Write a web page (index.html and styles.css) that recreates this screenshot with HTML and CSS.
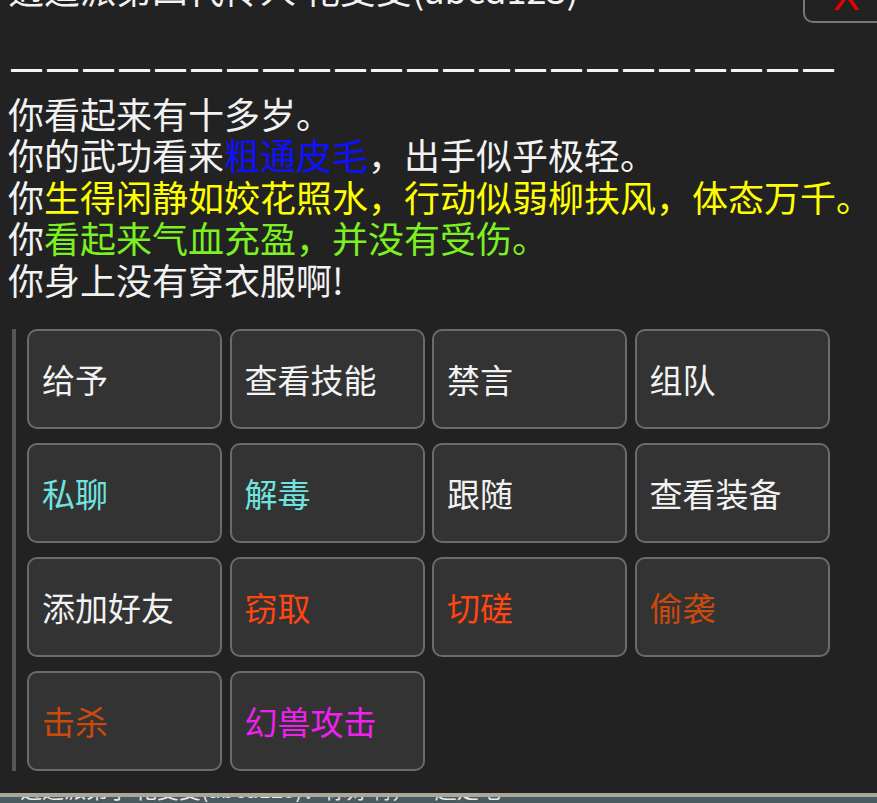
FILE: index.html
```html
<!DOCTYPE html>
<html lang="zh-CN">
<head>
<meta charset="utf-8">
<title>查看人物</title>
<link rel="stylesheet" href="styles.css">
</head>
<body>
<div class="panel">
  <div class="desc">
    <div class="line">逍遥派第四代传人 花旻旻(abcd123)</div>
    <div class="line">&nbsp;</div>
    <div class="line dash">———————————————————————</div>
    <div class="line">你看起来有十多岁。</div>
    <div class="line">你的武功看来<span class="c-blue">粗通皮毛</span>，出手似乎极轻。</div>
    <div class="line">你<span class="c-yellow">生得闲静如姣花照水，行动似弱柳扶风，体态万千。</span></div>
    <div class="line">你<span class="c-green">看起来气血充盈，并没有受伤。</span></div>
    <div class="line">你身上没有穿衣服啊!</div>
  </div>
  <div class="actions">
    <div class="grid">
      <div class="btn">给予</div>
      <div class="btn">查看技能</div>
      <div class="btn">禁言</div>
      <div class="btn">组队</div>
      <div class="btn c-cyan">私聊</div>
      <div class="btn c-cyan">解毒</div>
      <div class="btn">跟随</div>
      <div class="btn">查看装备</div>
      <div class="btn">添加好友</div>
      <div class="btn c-red">窃取</div>
      <div class="btn c-red">切磋</div>
      <div class="btn c-brown">偷袭</div>
      <div class="btn c-brown">击杀</div>
      <div class="btn c-magenta">幻兽攻击</div>
    </div>
  </div>
  <div class="close">X</div>
</div>
<div class="footer">
  <div class="footer-text">逍遥派弟子 花旻旻(abcd123)：你好啊，一起走吧</div>
</div>
</body>
</html>
```
FILE: styles.css
```css
html, body {
  margin: 0;
  padding: 0;
  background: #222222;
  overflow: hidden;
}

body {
  font-family: "Noto Sans CJK SC", "Noto Sans", sans-serif;
  color: #f2f2f2;
}

.panel {
  position: relative;
  background: #222222;
  margin-top: -32px;
  padding: 0 0 22px 0;
}

.desc {
  padding-left: 8px;
  font-size: 36px;
  line-height: 41.5px;
  white-space: nowrap;
}

.line {
  height: 41.5px;
}

.dash {
  font-family: "Liberation Sans", sans-serif;
  font-size: 31px;
  font-weight: bold;
  letter-spacing: 5px;
  color: #f4f4f4;
  margin: -3px 0 3px 3px;
}

.c-blue { color: #1010ff; }
.c-yellow { color: #ffff00; }
.c-green { color: #7cf020; }
.c-cyan { color: #6fe3e0; }
.c-red { color: #ff4510; }
.c-brown { color: #c84a0c; }
.c-magenta { color: #f020f0; }

.actions {
  margin: 29px 0 0 12px;
  border-left: 4px solid #565656;
  padding-left: 11px;
}

.grid {
  display: grid;
  grid-template-columns: repeat(4, 195px);
  grid-auto-rows: 100px;
  column-gap: 7.5px;
  row-gap: 14px;
}

.btn {
  box-sizing: border-box;
  background: #333333;
  border: 2px solid #6b6b6b;
  border-radius: 10px;
  display: flex;
  align-items: center;
  padding-left: 13px;
  font-size: 33px;
  color: #f2f2f2;
}

.btn.c-cyan { color: #6fe3e0; }
.btn.c-red { color: #ff4510; }
.btn.c-brown { color: #c84a0c; }
.btn.c-magenta { color: #f020f0; }

.close {
  position: absolute;
  left: 803px;
  top: -8px;
  width: 90px;
  height: 63px;
  box-sizing: border-box;
  border: 2px solid #777777;
  border-radius: 10px;
  background: #222222;
  display: flex;
  align-items: flex-end;
  padding: 0 0 5px 28px;
  font-family: "Liberation Sans", sans-serif;
  font-size: 40px;
  line-height: 40px;
  color: #e80000;
}

.footer {
  border-top: 4px solid #a9a799;
  background: #4b5a60;
  height: 40px;
  overflow: hidden;
}

.footer-text {
  margin-top: -24px;
  padding-left: 20px;
  font-size: 22px;
  line-height: 30px;
  color: #e8e8e8;
}
```
